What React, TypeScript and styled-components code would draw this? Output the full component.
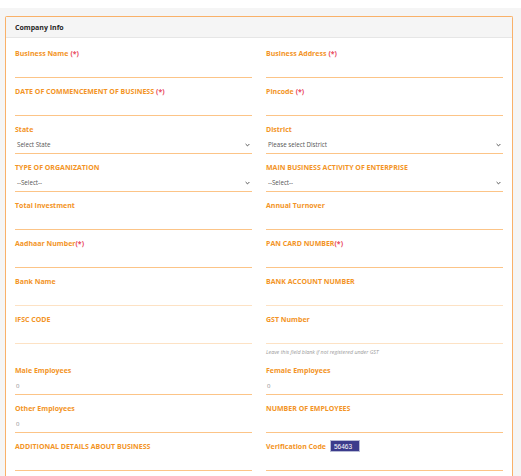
import React from 'react'
import styled, { createGlobalStyle } from 'styled-components'

const GlobalStyle = createGlobalStyle`
  *, *::before, *::after {
    box-sizing: border-box;
  }
  html, body {
    margin: 0;
    padding: 0;
    background: #fff;
  }
  body {
    font-family: 'Open Sans', 'Liberation Sans', sans-serif;
  }
`

const Shell = styled.div`
  margin-top: 8px;
  padding: 8px 8px 0 5px;
  background: #f5f5f5;
  min-height: 468px;
`

const Card = styled.div`
  background: #fff;
  border: 1px solid #f9b169;
  border-bottom: none;
  border-radius: 2px 2px 0 0;
`

const CardHeader = styled.div`
  height: 21px;
  display: flex;
  align-items: center;
  padding: 0 9px;
  background: #f5f5f5;
  border-bottom: 1px solid #e6e6e6;
  font-size: 7px;
  font-weight: 700;
  color: #262626;
`

const CardBody = styled.div`
  padding: 9px 9px 8px;
  display: grid;
  grid-template-columns: 1fr 1fr;
  column-gap: 14px;
  align-items: start;
`

const Field = styled.div`
  display: flex;
  flex-direction: column;
  margin-bottom: 7px;
`

const Label = styled.label`
  display: flex;
  align-items: center;
  height: 12px;
  font-size: 7px;
  font-weight: 700;
  color: #f39426;
  white-space: nowrap;
`

const Required = styled.span<{ $tight?: boolean }>`
  color: #e9485d;
  margin-left: ${(p) => (p.$tight ? '0' : '2px')};
`

const Input = styled.div<{ $faint?: boolean }>`
  height: 19px;
  border-bottom: 1px solid ${(p) => (p.$faint ? '#fde2c4' : '#fcc487')};
  display: flex;
  align-items: center;
  padding: 1px 1px 0;
  font-size: 6px;
  color: #8a8a8a;
`

const SelectBox = styled(Input)`
  justify-content: space-between;
  padding: 1px 2px 0;
  color: #555;
  font-size: 6.2px;
`

const Hint = styled.div`
  margin-top: 3px;
  height: 10px;
  line-height: 10px;
  font-size: 5.3px;
  font-style: italic;
  color: #9a9a9a;
`

const Captcha = styled.span`
  display: inline-flex;
  align-items: center;
  justify-content: center;
  margin-left: 4px;
  width: 30px;
  height: 12px;
  background: #3b3b8c;
  border: 1px solid #b9bcd6;
  color: #fff;
  font-family: 'Liberation Sans', Arial, sans-serif;
  font-size: 6.5px;
  font-weight: 400;
  padding-right: 4px;
`

const Chevron = () => (
  <svg width="5" height="4" viewBox="0 0 5 4">
    <path d="M0.6 1 L2.5 2.9 L4.4 1" fill="none" stroke="#444" strokeWidth="0.9" />
  </svg>
)

type FieldDef = {
  label: string
  req?: 'space' | 'tight'
  kind?: 'text' | 'select' | 'value' | 'captcha'
  text?: string
  hint?: string
  faint?: boolean
}

const fields: FieldDef[] = [
  { label: 'Business Name', req: 'space' },
  { label: 'Business Address', req: 'space' },
  { label: 'DATE OF COMMENCEMENT OF BUSINESS', req: 'space' },
  { label: 'Pincode', req: 'space' },
  { label: 'State', kind: 'select', text: 'Select State' },
  { label: 'District', kind: 'select', text: 'Please select District' },
  { label: 'TYPE OF ORGANIZATION', kind: 'select', text: '--Select--' },
  { label: 'MAIN BUSINESS ACTIVITY OF ENTERPRISE', kind: 'select', text: '--Select--' },
  { label: 'Total Investment' },
  { label: 'Annual Turnover' },
  { label: 'Aadhaar Number', req: 'tight' },
  { label: 'PAN CARD NUMBER', req: 'tight' },
  { label: 'Bank Name', faint: true },
  { label: 'BANK ACCOUNT NUMBER', faint: true },
  { label: 'IFSC CODE', faint: true },
  { label: 'GST Number', faint: true, hint: 'Leave this field blank if not registered under GST' },
  { label: 'Male Employees', kind: 'value', text: '0' },
  { label: 'Female Employees', kind: 'value', text: '0' },
  { label: 'Other Employees', kind: 'value', text: '0' },
  { label: 'NUMBER OF EMPLOYEES' },
  { label: 'ADDITIONAL DETAILS ABOUT BUSINESS' },
  { label: 'Verification Code', kind: 'captcha', text: '56463' },
]

const FormField = ({ f }: { f: FieldDef }) => (
  <Field>
    <Label>
      {f.label}
      {f.req && <Required $tight={f.req === 'tight'}>(*)</Required>}
      {f.kind === 'captcha' && <Captcha>{f.text}</Captcha>}
    </Label>
    {f.kind === 'select' ? (
      <SelectBox>
        <span>{f.text}</span>
        <Chevron />
      </SelectBox>
    ) : (
      <Input $faint={f.faint}>{f.kind === 'value' ? f.text : null}</Input>
    )}
    {f.hint && <Hint>{f.hint}</Hint>}
  </Field>
)

const App = () => (
  <>
    <GlobalStyle />
    <Shell>
      <Card>
        <CardHeader>Company Info</CardHeader>
        <CardBody>
          {fields.map((f) => (
            <FormField key={f.label} f={f} />
          ))}
        </CardBody>
      </Card>
    </Shell>
  </>
)

export default App
